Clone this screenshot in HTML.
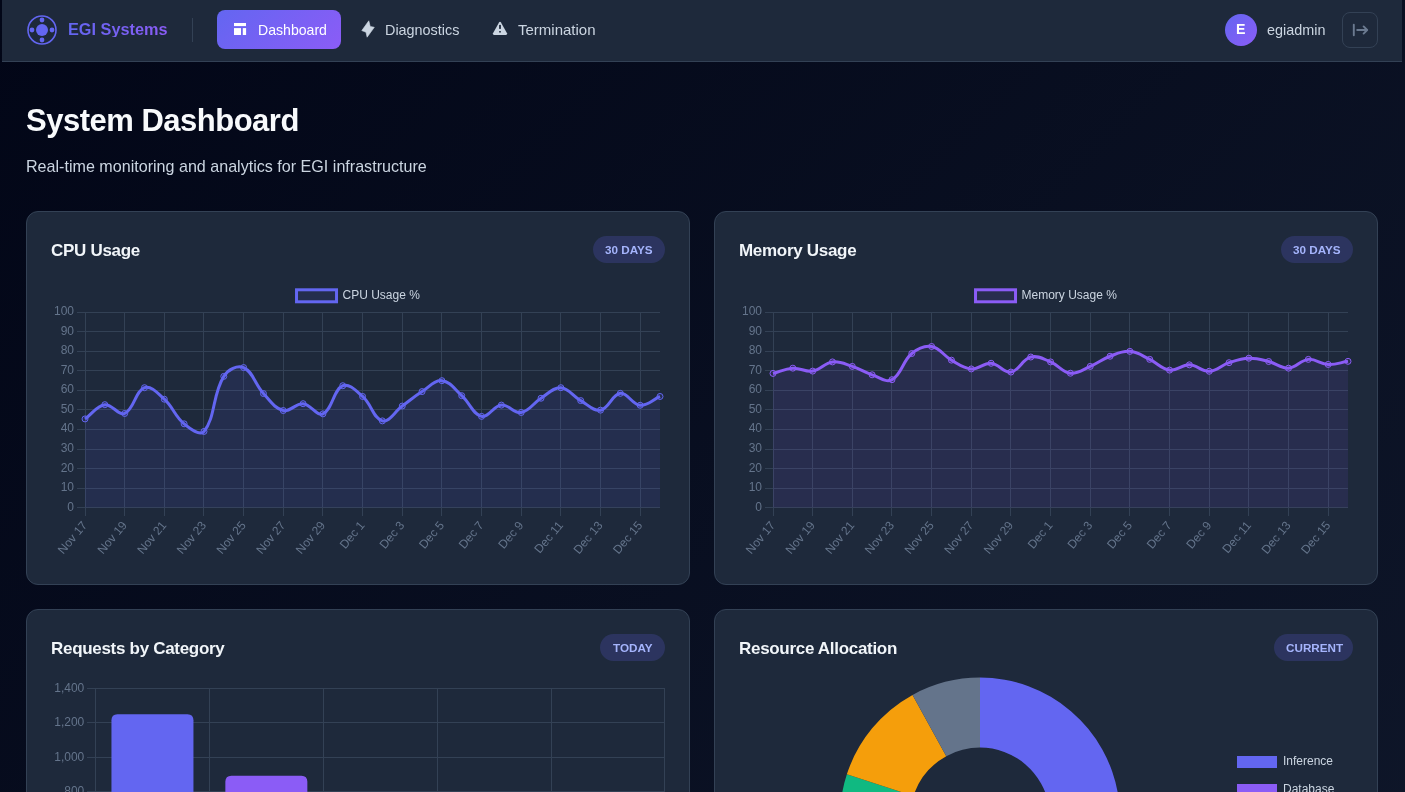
<!DOCTYPE html>
<html><head><meta charset="utf-8">
<style>
*{margin:0;padding:0;box-sizing:border-box}
html,body{width:1405px;height:792px;overflow:hidden}
body{background:#020617;font-family:"Liberation Sans", sans-serif;position:relative}
.bg{position:absolute;left:0;top:0;width:1405px;height:1000px;background:linear-gradient(135deg,#020617 0%,#0f172a 100%)}
.t{position:absolute;line-height:1;white-space:nowrap;will-change:transform}
.nav{position:absolute;left:2px;top:0;width:1400px;height:62px;background:#1e293b;border-bottom:1px solid #334155}
.card{position:absolute;background:#1e293b;border:1px solid #334155;border-radius:12px}
.badge{position:absolute;height:27px;border-radius:14px;background:rgba(99,102,241,0.2)}
svg.ov{position:absolute;left:0;top:0;will-change:transform}
.tk{font-family:"Liberation Sans", sans-serif;font-size:12px;fill:#64748b}
.lg{font-family:"Liberation Sans", sans-serif;font-size:12px;fill:#cbd5e1}
</style></head><body>

<div class="bg"></div>
<div class="nav"></div>
<svg class="ov" style="left:27px;top:15px" width="30" height="30" viewBox="0 0 30 30">
<circle cx="15" cy="15" r="14" fill="none" stroke="#6366f1" stroke-width="1.6"/>
<circle cx="15" cy="15" r="6" fill="#6366f1"/>
<circle cx="15" cy="5" r="2.4" fill="#6366f1"/><circle cx="15" cy="25" r="2.4" fill="#6366f1"/>
<circle cx="5" cy="15" r="2.4" fill="#6366f1"/><circle cx="25" cy="15" r="2.4" fill="#6366f1"/>
</svg>
<div class="t" style="left:68.0px;top:21.00px;font-size:16.30px;font-weight:700;color:#7c6cf5;background:linear-gradient(90deg,#6366f1,#8b5cf6);-webkit-background-clip:text;background-clip:text;color:transparent;">EGI Systems</div>
<div style="position:absolute;left:192px;top:18px;width:1px;height:24px;background:#334155"></div>
<div style="position:absolute;left:217px;top:10px;width:124px;height:39px;border-radius:8px;background:linear-gradient(135deg,#6366f1,#8b5cf6)"></div>
<svg class="ov" style="left:233px;top:22px" width="14" height="14" viewBox="0 0 14 14" fill="#fff">
<rect x="1" y="1" width="12" height="3.1"/><rect x="1" y="6.1" width="7" height="6.9"/><rect x="9.8" y="6.1" width="3.3" height="6.9"/>
</svg>
<div class="t" style="left:257.5px;top:23.26px;font-size:14.10px;font-weight:400;color:#ffffff;">Dashboard</div>
<svg class="ov" style="left:361px;top:20px" width="14" height="18" viewBox="0 0 14 18" fill="#cbd5e1">
<path d="M7.8 0.8 L9.2 6.4 L13.3 7.3 L6.1 17.2 L5.0 12.2 L0.8 10.6 Z" stroke="#cbd5e1" stroke-width="0.6" stroke-linejoin="round"/>
</svg>
<div class="t" style="left:385.0px;top:23.01px;font-size:14.40px;font-weight:400;color:#cbd5e1;">Diagnostics</div>
<svg class="ov" style="left:492px;top:21px" width="16" height="15" viewBox="0 0 16 15">
<path d="M8 0.8 Q8.6 0.8 9 1.5 L15 12.3 Q15.4 13.9 13.9 13.9 L2.1 13.9 Q0.6 13.9 1 12.3 L7 1.5 Q7.4 0.8 8 0.8 Z" fill="#cbd5e1"/>
<rect x="7.1" y="3.9" width="1.8" height="4" fill="#1e293b"/><rect x="7.1" y="10.1" width="1.8" height="1.4" fill="#1e293b"/>
</svg>
<div class="t" style="left:517.6px;top:21.90px;font-size:15.00px;font-weight:400;color:#cbd5e1;">Termination</div>
<div style="position:absolute;left:1225px;top:14px;width:32px;height:32px;border-radius:50%;background:linear-gradient(135deg,#6366f1,#8b5cf6)"></div>
<div class="t" style="left:1236.3px;top:21.78px;font-size:14.20px;font-weight:700;color:#ffffff;">E</div>
<div class="t" style="left:1266.9px;top:22.61px;font-size:14.40px;font-weight:400;color:#cbd5e1;">egiadmin</div>
<div style="position:absolute;left:1342px;top:12px;width:36px;height:36px;border-radius:8px;border:1px solid #334155"></div>
<svg class="ov" style="left:1345px;top:15px" width="30" height="30" viewBox="0 0 30 30" fill="none" stroke="#6b7a90" stroke-width="1.9" stroke-linecap="round" stroke-linejoin="round">
<path d="M8.8 9.8 V20.2"/><path d="M12.2 15 H21.6"/><path d="M18.6 11.4 L22.2 15 L18.6 18.6"/>
</svg>
<div class="t" style="left:26.0px;top:105.06px;font-size:31.00px;font-weight:700;color:#f8fafc;letter-spacing:-0.5px;">System Dashboard</div>
<div class="t" style="left:26.0px;top:158.27px;font-size:16.10px;font-weight:400;color:#cbd5e1;">Real-time monitoring and analytics for EGI infrastructure</div>
<div class="card" style="left:26px;top:211px;width:664px;height:374px"></div>
<div class="card" style="left:714px;top:211px;width:664px;height:374px"></div>
<div class="card" style="left:26px;top:609px;width:664px;height:400px"></div>
<div class="card" style="left:714px;top:609px;width:664px;height:400px"></div>
<div class="t" style="left:51.0px;top:241.61px;font-size:17.00px;font-weight:700;color:#f1f5f9;letter-spacing:-0.3px;">CPU Usage</div>
<div class="t" style="left:739.0px;top:241.61px;font-size:17.00px;font-weight:700;color:#f1f5f9;letter-spacing:-0.3px;">Memory Usage</div>
<div class="t" style="left:51.0px;top:639.61px;font-size:17.00px;font-weight:700;color:#f1f5f9;letter-spacing:-0.3px;">Requests by Category</div>
<div class="t" style="left:739.0px;top:639.61px;font-size:17.00px;font-weight:700;color:#f1f5f9;letter-spacing:-0.3px;">Resource Allocation</div>
<div class="badge" style="left:593px;top:236px;width:72px"></div>
<div class="t" style="left:605.0px;top:244.10px;font-size:11.70px;font-weight:700;color:#a5b4fc;">30 DAYS</div>
<div class="badge" style="left:1281px;top:236px;width:72px"></div>
<div class="t" style="left:1293.0px;top:244.10px;font-size:11.70px;font-weight:700;color:#a5b4fc;">30 DAYS</div>
<div class="badge" style="left:600px;top:634px;width:65px"></div>
<div class="t" style="left:612.5px;top:642.10px;font-size:11.70px;font-weight:700;color:#a5b4fc;">TODAY</div>
<div class="badge" style="left:1274px;top:634px;width:79px"></div>
<div class="t" style="left:1286.0px;top:642.10px;font-size:11.70px;font-weight:700;color:#a5b4fc;">CURRENT</div>
<svg class="ov" width="1405" height="792" viewBox="0 0 1405 792">
<rect x="77" y="507" width="583" height="1" fill="#334155"/>
<text x="74.0" y="510.8" text-anchor="end" class="tk">0</text>
<rect x="77" y="488" width="583" height="1" fill="#334155"/>
<text x="74.0" y="490.8" text-anchor="end" class="tk">10</text>
<rect x="77" y="468" width="583" height="1" fill="#334155"/>
<text x="74.0" y="471.8" text-anchor="end" class="tk">20</text>
<rect x="77" y="449" width="583" height="1" fill="#334155"/>
<text x="74.0" y="451.8" text-anchor="end" class="tk">30</text>
<rect x="77" y="429" width="583" height="1" fill="#334155"/>
<text x="74.0" y="431.8" text-anchor="end" class="tk">40</text>
<rect x="77" y="409" width="583" height="1" fill="#334155"/>
<text x="74.0" y="412.8" text-anchor="end" class="tk">50</text>
<rect x="77" y="390" width="583" height="1" fill="#334155"/>
<text x="74.0" y="392.8" text-anchor="end" class="tk">60</text>
<rect x="77" y="370" width="583" height="1" fill="#334155"/>
<text x="74.0" y="373.8" text-anchor="end" class="tk">70</text>
<rect x="77" y="351" width="583" height="1" fill="#334155"/>
<text x="74.0" y="353.8" text-anchor="end" class="tk">80</text>
<rect x="77" y="331" width="583" height="1" fill="#334155"/>
<text x="74.0" y="334.8" text-anchor="end" class="tk">90</text>
<rect x="77" y="312" width="583" height="1" fill="#334155"/>
<text x="74.0" y="314.8" text-anchor="end" class="tk">100</text>
<rect x="85" y="312" width="1" height="204" fill="#334155"/>
<text transform="translate(79.48 518.60) rotate(-50)" x="0" y="10.86" text-anchor="end" class="tk">Nov 17</text>
<rect x="124" y="312" width="1" height="204" fill="#334155"/>
<text transform="translate(119.14 518.60) rotate(-50)" x="0" y="10.86" text-anchor="end" class="tk">Nov 19</text>
<rect x="164" y="312" width="1" height="204" fill="#334155"/>
<text transform="translate(158.79 518.60) rotate(-50)" x="0" y="10.86" text-anchor="end" class="tk">Nov 21</text>
<rect x="203" y="312" width="1" height="204" fill="#334155"/>
<text transform="translate(198.45 518.60) rotate(-50)" x="0" y="10.86" text-anchor="end" class="tk">Nov 23</text>
<rect x="243" y="312" width="1" height="204" fill="#334155"/>
<text transform="translate(238.11 518.60) rotate(-50)" x="0" y="10.86" text-anchor="end" class="tk">Nov 25</text>
<rect x="283" y="312" width="1" height="204" fill="#334155"/>
<text transform="translate(277.76 518.60) rotate(-50)" x="0" y="10.86" text-anchor="end" class="tk">Nov 27</text>
<rect x="322" y="312" width="1" height="204" fill="#334155"/>
<text transform="translate(317.42 518.60) rotate(-50)" x="0" y="10.86" text-anchor="end" class="tk">Nov 29</text>
<rect x="362" y="312" width="1" height="204" fill="#334155"/>
<text transform="translate(357.07 518.60) rotate(-50)" x="0" y="10.86" text-anchor="end" class="tk">Dec 1</text>
<rect x="402" y="312" width="1" height="204" fill="#334155"/>
<text transform="translate(396.73 518.60) rotate(-50)" x="0" y="10.86" text-anchor="end" class="tk">Dec 3</text>
<rect x="441" y="312" width="1" height="204" fill="#334155"/>
<text transform="translate(436.38 518.60) rotate(-50)" x="0" y="10.86" text-anchor="end" class="tk">Dec 5</text>
<rect x="481" y="312" width="1" height="204" fill="#334155"/>
<text transform="translate(476.04 518.60) rotate(-50)" x="0" y="10.86" text-anchor="end" class="tk">Dec 7</text>
<rect x="521" y="312" width="1" height="204" fill="#334155"/>
<text transform="translate(515.69 518.60) rotate(-50)" x="0" y="10.86" text-anchor="end" class="tk">Dec 9</text>
<rect x="560" y="312" width="1" height="204" fill="#334155"/>
<text transform="translate(555.35 518.60) rotate(-50)" x="0" y="10.86" text-anchor="end" class="tk">Dec 11</text>
<rect x="600" y="312" width="1" height="204" fill="#334155"/>
<text transform="translate(595.00 518.60) rotate(-50)" x="0" y="10.86" text-anchor="end" class="tk">Dec 13</text>
<rect x="640" y="312" width="1" height="204" fill="#334155"/>
<text transform="translate(634.66 518.60) rotate(-50)" x="0" y="10.86" text-anchor="end" class="tk">Dec 15</text>
<path d="M85.00 418.93 C92.93 413.23 96.43 405.84 104.83 404.68 C112.29 403.65 118.31 416.18 124.66 413.47 C134.17 409.39 135.18 391.03 144.48 387.69 C151.04 385.33 157.64 393.13 164.31 399.21 C173.50 407.58 174.65 416.11 184.14 423.82 C190.51 429.00 199.74 436.49 203.97 431.43 C215.60 417.50 212.22 395.00 223.79 376.36 C228.08 369.45 237.29 364.83 243.62 367.57 C253.15 371.70 254.63 383.99 263.45 393.54 C270.49 401.18 274.48 408.28 283.28 410.54 C290.34 412.35 295.41 403.06 303.10 403.70 C311.27 404.38 316.70 416.68 322.93 413.86 C332.56 409.49 333.18 389.93 342.76 385.73 C349.04 382.98 355.96 390.60 362.59 396.47 C371.82 404.66 373.54 418.75 382.41 420.89 C389.40 422.57 394.27 411.93 402.24 406.04 C410.14 400.21 413.82 396.87 422.07 391.59 C429.68 386.72 434.34 379.87 441.90 380.66 C450.20 381.51 454.35 389.05 461.72 395.69 C470.22 403.35 472.72 414.31 481.55 416.39 C488.58 418.06 493.15 405.88 501.38 405.07 C509.01 404.32 513.84 413.76 521.21 412.49 C529.70 411.02 532.77 403.40 541.03 398.23 C548.63 393.48 553.14 387.23 560.86 387.69 C569.00 388.17 572.48 395.92 580.69 400.58 C588.34 404.91 593.24 411.47 600.52 410.15 C609.10 408.58 611.95 394.38 620.34 393.35 C627.82 392.43 631.99 404.62 640.17 405.26 C647.85 405.87 652.07 399.99 660.00 396.47 L660.00 507.60 L85.00 507.60 Z" fill="rgba(99,102,241,0.1)"/>
<path d="M85.00 418.93 C92.93 413.23 96.43 405.84 104.83 404.68 C112.29 403.65 118.31 416.18 124.66 413.47 C134.17 409.39 135.18 391.03 144.48 387.69 C151.04 385.33 157.64 393.13 164.31 399.21 C173.50 407.58 174.65 416.11 184.14 423.82 C190.51 429.00 199.74 436.49 203.97 431.43 C215.60 417.50 212.22 395.00 223.79 376.36 C228.08 369.45 237.29 364.83 243.62 367.57 C253.15 371.70 254.63 383.99 263.45 393.54 C270.49 401.18 274.48 408.28 283.28 410.54 C290.34 412.35 295.41 403.06 303.10 403.70 C311.27 404.38 316.70 416.68 322.93 413.86 C332.56 409.49 333.18 389.93 342.76 385.73 C349.04 382.98 355.96 390.60 362.59 396.47 C371.82 404.66 373.54 418.75 382.41 420.89 C389.40 422.57 394.27 411.93 402.24 406.04 C410.14 400.21 413.82 396.87 422.07 391.59 C429.68 386.72 434.34 379.87 441.90 380.66 C450.20 381.51 454.35 389.05 461.72 395.69 C470.22 403.35 472.72 414.31 481.55 416.39 C488.58 418.06 493.15 405.88 501.38 405.07 C509.01 404.32 513.84 413.76 521.21 412.49 C529.70 411.02 532.77 403.40 541.03 398.23 C548.63 393.48 553.14 387.23 560.86 387.69 C569.00 388.17 572.48 395.92 580.69 400.58 C588.34 404.91 593.24 411.47 600.52 410.15 C609.10 408.58 611.95 394.38 620.34 393.35 C627.82 392.43 631.99 404.62 640.17 405.26 C647.85 405.87 652.07 399.99 660.00 396.47" fill="none" stroke="#6366f1" stroke-width="3" stroke-linejoin="round"/>
<circle cx="85.00" cy="418.93" r="3" fill="rgba(99,102,241,0.1)" stroke="#6366f1" stroke-width="1"/>
<circle cx="104.83" cy="404.68" r="3" fill="rgba(99,102,241,0.1)" stroke="#6366f1" stroke-width="1"/>
<circle cx="124.66" cy="413.47" r="3" fill="rgba(99,102,241,0.1)" stroke="#6366f1" stroke-width="1"/>
<circle cx="144.48" cy="387.69" r="3" fill="rgba(99,102,241,0.1)" stroke="#6366f1" stroke-width="1"/>
<circle cx="164.31" cy="399.21" r="3" fill="rgba(99,102,241,0.1)" stroke="#6366f1" stroke-width="1"/>
<circle cx="184.14" cy="423.82" r="3" fill="rgba(99,102,241,0.1)" stroke="#6366f1" stroke-width="1"/>
<circle cx="203.97" cy="431.43" r="3" fill="rgba(99,102,241,0.1)" stroke="#6366f1" stroke-width="1"/>
<circle cx="223.79" cy="376.36" r="3" fill="rgba(99,102,241,0.1)" stroke="#6366f1" stroke-width="1"/>
<circle cx="243.62" cy="367.57" r="3" fill="rgba(99,102,241,0.1)" stroke="#6366f1" stroke-width="1"/>
<circle cx="263.45" cy="393.54" r="3" fill="rgba(99,102,241,0.1)" stroke="#6366f1" stroke-width="1"/>
<circle cx="283.28" cy="410.54" r="3" fill="rgba(99,102,241,0.1)" stroke="#6366f1" stroke-width="1"/>
<circle cx="303.10" cy="403.70" r="3" fill="rgba(99,102,241,0.1)" stroke="#6366f1" stroke-width="1"/>
<circle cx="322.93" cy="413.86" r="3" fill="rgba(99,102,241,0.1)" stroke="#6366f1" stroke-width="1"/>
<circle cx="342.76" cy="385.73" r="3" fill="rgba(99,102,241,0.1)" stroke="#6366f1" stroke-width="1"/>
<circle cx="362.59" cy="396.47" r="3" fill="rgba(99,102,241,0.1)" stroke="#6366f1" stroke-width="1"/>
<circle cx="382.41" cy="420.89" r="3" fill="rgba(99,102,241,0.1)" stroke="#6366f1" stroke-width="1"/>
<circle cx="402.24" cy="406.04" r="3" fill="rgba(99,102,241,0.1)" stroke="#6366f1" stroke-width="1"/>
<circle cx="422.07" cy="391.59" r="3" fill="rgba(99,102,241,0.1)" stroke="#6366f1" stroke-width="1"/>
<circle cx="441.90" cy="380.66" r="3" fill="rgba(99,102,241,0.1)" stroke="#6366f1" stroke-width="1"/>
<circle cx="461.72" cy="395.69" r="3" fill="rgba(99,102,241,0.1)" stroke="#6366f1" stroke-width="1"/>
<circle cx="481.55" cy="416.39" r="3" fill="rgba(99,102,241,0.1)" stroke="#6366f1" stroke-width="1"/>
<circle cx="501.38" cy="405.07" r="3" fill="rgba(99,102,241,0.1)" stroke="#6366f1" stroke-width="1"/>
<circle cx="521.21" cy="412.49" r="3" fill="rgba(99,102,241,0.1)" stroke="#6366f1" stroke-width="1"/>
<circle cx="541.03" cy="398.23" r="3" fill="rgba(99,102,241,0.1)" stroke="#6366f1" stroke-width="1"/>
<circle cx="560.86" cy="387.69" r="3" fill="rgba(99,102,241,0.1)" stroke="#6366f1" stroke-width="1"/>
<circle cx="580.69" cy="400.58" r="3" fill="rgba(99,102,241,0.1)" stroke="#6366f1" stroke-width="1"/>
<circle cx="600.52" cy="410.15" r="3" fill="rgba(99,102,241,0.1)" stroke="#6366f1" stroke-width="1"/>
<circle cx="620.34" cy="393.35" r="3" fill="rgba(99,102,241,0.1)" stroke="#6366f1" stroke-width="1"/>
<circle cx="640.17" cy="405.26" r="3" fill="rgba(99,102,241,0.1)" stroke="#6366f1" stroke-width="1"/>
<circle cx="660.00" cy="396.47" r="3" fill="rgba(99,102,241,0.1)" stroke="#6366f1" stroke-width="1"/>
<rect x="296.52" y="289.8" width="40" height="12" fill="rgba(99,102,241,0.1)" stroke="#6366f1" stroke-width="3"/>
<text x="342.52" y="299.3" class="lg">CPU Usage %</text>
<rect x="765" y="507" width="583" height="1" fill="#334155"/>
<text x="762.0" y="510.8" text-anchor="end" class="tk">0</text>
<rect x="765" y="488" width="583" height="1" fill="#334155"/>
<text x="762.0" y="490.8" text-anchor="end" class="tk">10</text>
<rect x="765" y="468" width="583" height="1" fill="#334155"/>
<text x="762.0" y="471.8" text-anchor="end" class="tk">20</text>
<rect x="765" y="449" width="583" height="1" fill="#334155"/>
<text x="762.0" y="451.8" text-anchor="end" class="tk">30</text>
<rect x="765" y="429" width="583" height="1" fill="#334155"/>
<text x="762.0" y="431.8" text-anchor="end" class="tk">40</text>
<rect x="765" y="409" width="583" height="1" fill="#334155"/>
<text x="762.0" y="412.8" text-anchor="end" class="tk">50</text>
<rect x="765" y="390" width="583" height="1" fill="#334155"/>
<text x="762.0" y="392.8" text-anchor="end" class="tk">60</text>
<rect x="765" y="370" width="583" height="1" fill="#334155"/>
<text x="762.0" y="373.8" text-anchor="end" class="tk">70</text>
<rect x="765" y="351" width="583" height="1" fill="#334155"/>
<text x="762.0" y="353.8" text-anchor="end" class="tk">80</text>
<rect x="765" y="331" width="583" height="1" fill="#334155"/>
<text x="762.0" y="334.8" text-anchor="end" class="tk">90</text>
<rect x="765" y="312" width="583" height="1" fill="#334155"/>
<text x="762.0" y="314.8" text-anchor="end" class="tk">100</text>
<rect x="773" y="312" width="1" height="204" fill="#334155"/>
<text transform="translate(767.48 518.60) rotate(-50)" x="0" y="10.86" text-anchor="end" class="tk">Nov 17</text>
<rect x="812" y="312" width="1" height="204" fill="#334155"/>
<text transform="translate(807.14 518.60) rotate(-50)" x="0" y="10.86" text-anchor="end" class="tk">Nov 19</text>
<rect x="852" y="312" width="1" height="204" fill="#334155"/>
<text transform="translate(846.79 518.60) rotate(-50)" x="0" y="10.86" text-anchor="end" class="tk">Nov 21</text>
<rect x="891" y="312" width="1" height="204" fill="#334155"/>
<text transform="translate(886.45 518.60) rotate(-50)" x="0" y="10.86" text-anchor="end" class="tk">Nov 23</text>
<rect x="931" y="312" width="1" height="204" fill="#334155"/>
<text transform="translate(926.11 518.60) rotate(-50)" x="0" y="10.86" text-anchor="end" class="tk">Nov 25</text>
<rect x="971" y="312" width="1" height="204" fill="#334155"/>
<text transform="translate(965.76 518.60) rotate(-50)" x="0" y="10.86" text-anchor="end" class="tk">Nov 27</text>
<rect x="1010" y="312" width="1" height="204" fill="#334155"/>
<text transform="translate(1005.42 518.60) rotate(-50)" x="0" y="10.86" text-anchor="end" class="tk">Nov 29</text>
<rect x="1050" y="312" width="1" height="204" fill="#334155"/>
<text transform="translate(1045.07 518.60) rotate(-50)" x="0" y="10.86" text-anchor="end" class="tk">Dec 1</text>
<rect x="1090" y="312" width="1" height="204" fill="#334155"/>
<text transform="translate(1084.73 518.60) rotate(-50)" x="0" y="10.86" text-anchor="end" class="tk">Dec 3</text>
<rect x="1129" y="312" width="1" height="204" fill="#334155"/>
<text transform="translate(1124.38 518.60) rotate(-50)" x="0" y="10.86" text-anchor="end" class="tk">Dec 5</text>
<rect x="1169" y="312" width="1" height="204" fill="#334155"/>
<text transform="translate(1164.04 518.60) rotate(-50)" x="0" y="10.86" text-anchor="end" class="tk">Dec 7</text>
<rect x="1209" y="312" width="1" height="204" fill="#334155"/>
<text transform="translate(1203.69 518.60) rotate(-50)" x="0" y="10.86" text-anchor="end" class="tk">Dec 9</text>
<rect x="1248" y="312" width="1" height="204" fill="#334155"/>
<text transform="translate(1243.35 518.60) rotate(-50)" x="0" y="10.86" text-anchor="end" class="tk">Dec 11</text>
<rect x="1288" y="312" width="1" height="204" fill="#334155"/>
<text transform="translate(1283.00 518.60) rotate(-50)" x="0" y="10.86" text-anchor="end" class="tk">Dec 13</text>
<rect x="1328" y="312" width="1" height="204" fill="#334155"/>
<text transform="translate(1322.66 518.60) rotate(-50)" x="0" y="10.86" text-anchor="end" class="tk">Dec 15</text>
<path d="M773.00 373.43 C780.93 371.32 784.80 368.63 792.83 368.16 C800.67 367.69 805.07 372.28 812.66 371.09 C820.93 369.78 824.27 362.88 832.48 361.91 C840.13 361.00 844.61 363.89 852.31 366.40 C860.47 369.05 864.00 372.07 872.14 374.80 C879.86 377.38 885.88 382.94 891.97 379.68 C901.75 374.43 902.13 361.60 911.79 353.51 C917.99 348.32 924.23 345.24 931.62 346.48 C940.09 347.90 943.10 355.42 951.45 360.15 C958.96 364.41 963.14 368.30 971.28 368.94 C979.01 369.55 983.37 362.66 991.10 363.27 C999.23 363.91 1003.54 373.23 1010.93 372.06 C1019.41 370.73 1022.05 359.26 1030.76 357.02 C1037.91 355.19 1043.10 358.85 1050.59 361.91 C1058.96 365.33 1062.15 372.30 1070.41 373.23 C1078.01 374.09 1082.55 369.69 1090.24 366.40 C1098.41 362.90 1101.79 359.38 1110.07 356.24 C1117.66 353.37 1122.15 350.75 1129.90 351.36 C1138.01 352.00 1142.00 355.72 1149.72 359.37 C1157.87 363.22 1161.25 368.96 1169.55 370.11 C1177.11 371.15 1181.51 364.60 1189.38 364.84 C1197.37 365.07 1201.42 371.70 1209.21 371.28 C1217.28 370.84 1220.86 365.38 1229.03 362.69 C1236.72 360.15 1240.89 358.43 1248.86 358.20 C1256.75 357.96 1260.91 359.56 1268.69 361.52 C1276.78 363.55 1280.73 368.58 1288.52 368.16 C1296.59 367.72 1300.18 360.13 1308.34 359.37 C1316.05 358.65 1320.16 364.05 1328.17 364.45 C1336.03 364.83 1340.07 362.57 1348.00 361.32 L1348.00 507.60 L773.00 507.60 Z" fill="rgba(139,92,246,0.1)"/>
<path d="M773.00 373.43 C780.93 371.32 784.80 368.63 792.83 368.16 C800.67 367.69 805.07 372.28 812.66 371.09 C820.93 369.78 824.27 362.88 832.48 361.91 C840.13 361.00 844.61 363.89 852.31 366.40 C860.47 369.05 864.00 372.07 872.14 374.80 C879.86 377.38 885.88 382.94 891.97 379.68 C901.75 374.43 902.13 361.60 911.79 353.51 C917.99 348.32 924.23 345.24 931.62 346.48 C940.09 347.90 943.10 355.42 951.45 360.15 C958.96 364.41 963.14 368.30 971.28 368.94 C979.01 369.55 983.37 362.66 991.10 363.27 C999.23 363.91 1003.54 373.23 1010.93 372.06 C1019.41 370.73 1022.05 359.26 1030.76 357.02 C1037.91 355.19 1043.10 358.85 1050.59 361.91 C1058.96 365.33 1062.15 372.30 1070.41 373.23 C1078.01 374.09 1082.55 369.69 1090.24 366.40 C1098.41 362.90 1101.79 359.38 1110.07 356.24 C1117.66 353.37 1122.15 350.75 1129.90 351.36 C1138.01 352.00 1142.00 355.72 1149.72 359.37 C1157.87 363.22 1161.25 368.96 1169.55 370.11 C1177.11 371.15 1181.51 364.60 1189.38 364.84 C1197.37 365.07 1201.42 371.70 1209.21 371.28 C1217.28 370.84 1220.86 365.38 1229.03 362.69 C1236.72 360.15 1240.89 358.43 1248.86 358.20 C1256.75 357.96 1260.91 359.56 1268.69 361.52 C1276.78 363.55 1280.73 368.58 1288.52 368.16 C1296.59 367.72 1300.18 360.13 1308.34 359.37 C1316.05 358.65 1320.16 364.05 1328.17 364.45 C1336.03 364.83 1340.07 362.57 1348.00 361.32" fill="none" stroke="#8b5cf6" stroke-width="3" stroke-linejoin="round"/>
<circle cx="773.00" cy="373.43" r="3" fill="rgba(139,92,246,0.1)" stroke="#8b5cf6" stroke-width="1"/>
<circle cx="792.83" cy="368.16" r="3" fill="rgba(139,92,246,0.1)" stroke="#8b5cf6" stroke-width="1"/>
<circle cx="812.66" cy="371.09" r="3" fill="rgba(139,92,246,0.1)" stroke="#8b5cf6" stroke-width="1"/>
<circle cx="832.48" cy="361.91" r="3" fill="rgba(139,92,246,0.1)" stroke="#8b5cf6" stroke-width="1"/>
<circle cx="852.31" cy="366.40" r="3" fill="rgba(139,92,246,0.1)" stroke="#8b5cf6" stroke-width="1"/>
<circle cx="872.14" cy="374.80" r="3" fill="rgba(139,92,246,0.1)" stroke="#8b5cf6" stroke-width="1"/>
<circle cx="891.97" cy="379.68" r="3" fill="rgba(139,92,246,0.1)" stroke="#8b5cf6" stroke-width="1"/>
<circle cx="911.79" cy="353.51" r="3" fill="rgba(139,92,246,0.1)" stroke="#8b5cf6" stroke-width="1"/>
<circle cx="931.62" cy="346.48" r="3" fill="rgba(139,92,246,0.1)" stroke="#8b5cf6" stroke-width="1"/>
<circle cx="951.45" cy="360.15" r="3" fill="rgba(139,92,246,0.1)" stroke="#8b5cf6" stroke-width="1"/>
<circle cx="971.28" cy="368.94" r="3" fill="rgba(139,92,246,0.1)" stroke="#8b5cf6" stroke-width="1"/>
<circle cx="991.10" cy="363.27" r="3" fill="rgba(139,92,246,0.1)" stroke="#8b5cf6" stroke-width="1"/>
<circle cx="1010.93" cy="372.06" r="3" fill="rgba(139,92,246,0.1)" stroke="#8b5cf6" stroke-width="1"/>
<circle cx="1030.76" cy="357.02" r="3" fill="rgba(139,92,246,0.1)" stroke="#8b5cf6" stroke-width="1"/>
<circle cx="1050.59" cy="361.91" r="3" fill="rgba(139,92,246,0.1)" stroke="#8b5cf6" stroke-width="1"/>
<circle cx="1070.41" cy="373.23" r="3" fill="rgba(139,92,246,0.1)" stroke="#8b5cf6" stroke-width="1"/>
<circle cx="1090.24" cy="366.40" r="3" fill="rgba(139,92,246,0.1)" stroke="#8b5cf6" stroke-width="1"/>
<circle cx="1110.07" cy="356.24" r="3" fill="rgba(139,92,246,0.1)" stroke="#8b5cf6" stroke-width="1"/>
<circle cx="1129.90" cy="351.36" r="3" fill="rgba(139,92,246,0.1)" stroke="#8b5cf6" stroke-width="1"/>
<circle cx="1149.72" cy="359.37" r="3" fill="rgba(139,92,246,0.1)" stroke="#8b5cf6" stroke-width="1"/>
<circle cx="1169.55" cy="370.11" r="3" fill="rgba(139,92,246,0.1)" stroke="#8b5cf6" stroke-width="1"/>
<circle cx="1189.38" cy="364.84" r="3" fill="rgba(139,92,246,0.1)" stroke="#8b5cf6" stroke-width="1"/>
<circle cx="1209.21" cy="371.28" r="3" fill="rgba(139,92,246,0.1)" stroke="#8b5cf6" stroke-width="1"/>
<circle cx="1229.03" cy="362.69" r="3" fill="rgba(139,92,246,0.1)" stroke="#8b5cf6" stroke-width="1"/>
<circle cx="1248.86" cy="358.20" r="3" fill="rgba(139,92,246,0.1)" stroke="#8b5cf6" stroke-width="1"/>
<circle cx="1268.69" cy="361.52" r="3" fill="rgba(139,92,246,0.1)" stroke="#8b5cf6" stroke-width="1"/>
<circle cx="1288.52" cy="368.16" r="3" fill="rgba(139,92,246,0.1)" stroke="#8b5cf6" stroke-width="1"/>
<circle cx="1308.34" cy="359.37" r="3" fill="rgba(139,92,246,0.1)" stroke="#8b5cf6" stroke-width="1"/>
<circle cx="1328.17" cy="364.45" r="3" fill="rgba(139,92,246,0.1)" stroke="#8b5cf6" stroke-width="1"/>
<circle cx="1348.00" cy="361.32" r="3" fill="rgba(139,92,246,0.1)" stroke="#8b5cf6" stroke-width="1"/>
<rect x="975.52" y="289.8" width="40" height="12" fill="rgba(139,92,246,0.1)" stroke="#8b5cf6" stroke-width="3"/>
<text x="1021.52" y="299.3" class="lg">Memory Usage %</text>
<rect x="87" y="688" width="578" height="1" fill="#334155"/>
<text x="84.3" y="691.9" text-anchor="end" class="tk">1,400</text>
<rect x="87" y="722" width="578" height="1" fill="#334155"/>
<text x="84.3" y="725.9" text-anchor="end" class="tk">1,200</text>
<rect x="87" y="757" width="578" height="1" fill="#334155"/>
<text x="84.3" y="760.9" text-anchor="end" class="tk">1,000</text>
<rect x="87" y="791" width="578" height="1" fill="#334155"/>
<text x="84.3" y="794.9" text-anchor="end" class="tk">800</text>
<rect x="87" y="825" width="578" height="1" fill="#334155"/>
<text x="84.3" y="828.9" text-anchor="end" class="tk">600</text>
<rect x="87" y="859" width="578" height="1" fill="#334155"/>
<text x="84.3" y="862.9" text-anchor="end" class="tk">400</text>
<rect x="87" y="893" width="578" height="1" fill="#334155"/>
<text x="84.3" y="896.9" text-anchor="end" class="tk">200</text>
<rect x="87" y="928" width="578" height="1" fill="#334155"/>
<text x="84.3" y="931.9" text-anchor="end" class="tk">0</text>
<rect x="95" y="688" width="1" height="200" fill="#334155"/>
<rect x="209" y="688" width="1" height="200" fill="#334155"/>
<rect x="323" y="688" width="1" height="200" fill="#334155"/>
<rect x="437" y="688" width="1" height="200" fill="#334155"/>
<rect x="551" y="688" width="1" height="200" fill="#334155"/>
<rect x="664" y="688" width="1" height="200" fill="#334155"/>
<path d="M111.45 800 L111.45 720.25 Q111.45 714.25 117.45 714.25 L187.45 714.25 Q193.45 714.25 193.45 720.25 L193.45 800 Z" fill="#6366f1"/>
<path d="M225.35 800 L225.35 781.81 Q225.35 775.81 231.35 775.81 L301.35 775.81 Q307.35 775.81 307.35 781.81 L307.35 800 Z" fill="#8b5cf6"/>
<path d="M980.00 677.60 A140 140 0 0 1 1023.26 950.75 L1001.63 884.17 A70 70 0 0 0 980.00 747.60 Z" fill="#6366f1"/>
<path d="M1023.26 950.75 A140 140 0 0 1 866.74 899.89 L923.37 858.74 A70 70 0 0 0 1001.63 884.17 Z" fill="#8b5cf6"/>
<path d="M866.74 899.89 A140 140 0 0 1 846.85 774.34 L913.43 795.97 A70 70 0 0 0 923.37 858.74 Z" fill="#10b981"/>
<path d="M846.85 774.34 A140 140 0 0 1 912.55 694.92 L946.28 756.26 A70 70 0 0 0 913.43 795.97 Z" fill="#f59e0b"/>
<path d="M912.55 694.92 A140 140 0 0 1 980.00 677.60 L980.00 747.60 A70 70 0 0 0 946.28 756.26 Z" fill="#64748b"/>
<rect x="1237" y="756" width="40" height="12" fill="#6366f1"/>
<text x="1283" y="764.6" class="lg">Inference</text>
<rect x="1237" y="784" width="40" height="12" fill="#8b5cf6"/>
<text x="1283" y="792.6" class="lg">Database</text>
</svg>
</body></html>
